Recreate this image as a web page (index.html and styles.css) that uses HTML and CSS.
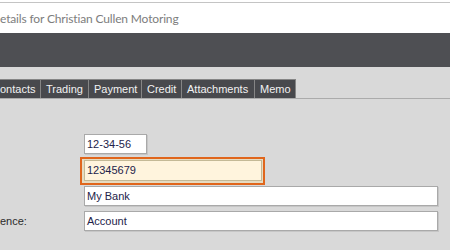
FILE: index.html
```html
<!DOCTYPE html>
<html>
<head>
<meta charset="utf-8">
<link rel="stylesheet" href="styles.css">
</head>
<body>
<div class="window">
  <div class="top">
    <div class="titlebar"><span class="title">etails for Christian Cullen Motoring</span></div>
  </div>
  <div class="darkbar"></div>
  <div class="content">
    <div class="tabs">
      <div class="tab first">ontacts</div>
      <div class="tab">Trading</div>
      <div class="tab">Payment</div>
      <div class="tab">Credit</div>
      <div class="tab">Attachments</div>
      <div class="tab">Memo</div>
    </div>
    <div class="form">
      <div class="row row1">
        <div class="label"></div>
        <div class="field short">12-34-56</div>
      </div>
      <div class="row row2">
        <div class="focus-ring"><div class="field focused">12345679</div></div>
      </div>
      <div class="row row3">
        <div class="label"></div>
        <div class="field wide">My Bank</div>
      </div>
      <div class="row row4">
        <div class="label">ence:</div>
        <div class="field wide">Account</div>
      </div>
    </div>
  </div>
</div>
</body>
</html>
```
FILE: styles.css
```css
html, body {
  margin: 0;
  padding: 0;
}
body {
  width: 450px;
  height: 250px;
  overflow: hidden;
  background: #d9d9d9;
  font-family: "Liberation Sans", Arial, sans-serif;
}
.window {
  width: 450px;
  height: 250px;
  display: flex;
  flex-direction: column;
}
.top {
  background: #ffffff;
  padding-top: 2px;
}
.titlebar {
  border-top: 1px solid #c4c4c4;
  height: 30px;
  display: flex;
  align-items: center;
  background: #ffffff;
}
.title {
  font-family: Lato, "Open Sans", sans-serif;
  font-size: 12px;
  letter-spacing: -0.15px;
  color: #7d7d7d;
  white-space: nowrap;
  margin-top: 1px;
}
.darkbar {
  height: 34px;
  background: #4e4f53;
}
.content {
  flex: 1;
  background: #d9d9d9;
  padding-top: 12px;
}
.tabs {
  display: flex;
  height: 19px;
  border-bottom: 1px solid #ababab;
}
.tab {
  height: 19px;
  box-sizing: border-box;
  background: #48494d;
  color: #f2f2f2;
  font-size: 11px;
  line-height: 18px;
  padding: 0 5px;
  border: 1px solid #858585;
  border-left: none;
  border-bottom: none;
  white-space: nowrap;
}
.tab.first {
  padding-left: 0;
  width: 41px;
}
.tab:nth-child(2) { width: 48px; }
.tab:nth-child(3) { width: 53px; }
.tab:nth-child(4) { width: 40px; }
.tab:nth-child(5) { width: 73px; }
.tab:nth-child(6) { width: 41px; }
.form {
  display: flex;
  flex-direction: column;
  padding-top: 35px;
}
.row {
  display: flex;
  align-items: center;
}
.label {
  width: 84px;
  font-size: 11px;
  color: #2b2b2b;
  white-space: nowrap;
}
.field {
  box-sizing: border-box;
  height: 20px;
  background: #ffffff;
  border: 1px solid #a9a9a9;
  box-shadow: 1px 1px 0 #c6c6c6;
  font-size: 11px;
  line-height: 18px;
  padding-left: 2px;
  color: #23234a;
  white-space: nowrap;
}
.field.short { width: 63px; }
.field.wide { width: 354px; }
.row2 {
  margin-top: 3px;
  padding-left: 80px;
}
.focus-ring {
  box-sizing: border-box;
  width: 185px;
  height: 28px;
  border: 2px solid #e0661c;
  background: #e6dcc2;
  padding: 1px 0 0 2px;
}
.field.focused {
  width: 178px;
  height: 21px;
  background: #fff4dd;
  border: 1px solid #c4b996;
  box-shadow: none;
  line-height: 19px;
}
.row3 { margin-top: 1px; }
.row4 { margin-top: 5px; }
```
